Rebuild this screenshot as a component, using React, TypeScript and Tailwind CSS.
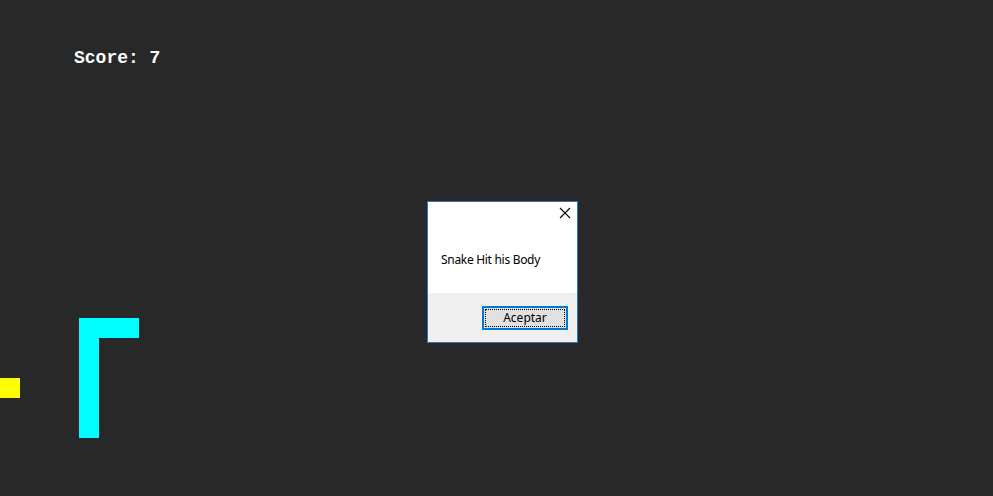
export default function App() {
  return (
    <div className="relative w-[993px] h-[496px] overflow-hidden bg-[#282828]">
      {/* score */}
      <div className="pl-[74px] pt-[47px]">
        <p className="font-['Liberation_Mono',monospace] font-bold text-[18px] leading-[22px] text-white">Score: 7</p>
      </div>

      {/* snake + food on the board */}
      <div className="absolute left-0 top-[378px] w-[20px] h-[20px] bg-[#ffff00]" />
      <div className="absolute left-[79px] top-[318px] w-[60px] h-[20px] bg-[#00ffff]" />
      <div className="absolute left-[79px] top-[318px] w-[20px] h-[120px] bg-[#00ffff]" />

      {/* message box */}
      <div className="absolute left-[427px] top-[201px] w-[151px] h-[142px] border border-[#2a77c0] bg-white flex flex-col font-['Noto_Sans',sans-serif]">
        <div className="flex justify-end pt-[5px] pr-[6px]">
          <svg width="12" height="12" viewBox="0 0 12 12" className="text-black">
            <path d="M1 1 L11 11 M11 1 L1 11" stroke="currentColor" strokeWidth="1.1" fill="none" />
          </svg>
        </div>
        <div className="flex-1 pl-[13px] pt-[33px]">
          <p className="text-[12px] leading-[16px] text-black tracking-[-0.3px]">Snake Hit his Body</p>
        </div>
        <div className="h-[49px] bg-[#f0f0f0] flex justify-end items-start pt-[13px] pr-[9px]">
          <button className="w-[86px] h-[24px] border-2 border-[#0078d7] bg-[#e1e1e1] p-[1px]">
            <span className="flex items-center justify-center w-full h-full border border-dotted border-black text-[12px] leading-none text-black">Aceptar</span>
          </button>
        </div>
      </div>
    </div>
  );
}
